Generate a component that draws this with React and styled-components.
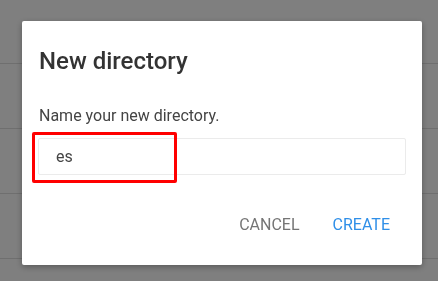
import React from "react";
import styled, { createGlobalStyle } from "styled-components";

const Global = createGlobalStyle`
  html, body { margin: 0; padding: 0; background: #ffffff; overflow: hidden; }
  body { font-family: Roboto, "Liberation Sans", sans-serif; }
  * { box-sizing: border-box; }
`;

const RowList = styled.div`
  margin-top: -1px;
  display: flex;
  flex-direction: column;
`;

const Row = styled.div`
  height: 65px;
  border-bottom: 1px solid #dfdfdf;
`;

const Backdrop = styled.div`
  position: fixed;
  inset: 0;
  background: rgba(0, 0, 0, 0.5);
  display: flex;
  align-items: flex-start;
  justify-content: flex-start;
  padding: 21px 0 0 22px;
`;

const Dialog = styled.div`
  width: 400px;
  height: 244px;
  background: #fff;
  border-radius: 2px;
  box-shadow: 0 2px 6px rgba(0, 0, 0, 0.3);
  padding: 0 16px;
  display: flex;
  flex-direction: column;
`;

const Title = styled.h2`
  margin: 0;
  padding-top: 25px;
  font-size: 24px;
  line-height: 30px;
  font-weight: 500;
  color: #333;
  padding-left: 1px;
`;

const Body = styled.p`
  margin: 0;
  margin-top: 30px;
  font-size: 16px;
  line-height: 20px;
  color: #444;
  padding-left: 1px;
`;

const Field = styled.div`
  position: relative;
  margin-top: 12px;
`;

const Input = styled.input`
  display: block;
  width: 100%;
  height: 37px;
  border: 1px solid #ebebeb;
  border-radius: 2px;
  padding: 0 17px;
  font-family: Roboto, "Liberation Sans", sans-serif;
  font-size: 16px;
  color: #444;
  outline: none;
  background: #fff;
`;

const Highlight = styled.div`
  position: absolute;
  left: -6px;
  top: -6px;
  width: 145px;
  height: 51px;
  border: 3px solid #ff0000;
  border-radius: 2px;
  pointer-events: none;
`;

const Actions = styled.div`
  margin-top: 31px;
  display: flex;
  justify-content: flex-end;
  gap: 1px;
`;

const Button = styled.button`
  border: none;
  background: transparent;
  padding: 0 16px;
  height: 36px;
  font-family: Roboto, "Liberation Sans", sans-serif;
  font-size: 16px;
  text-transform: uppercase;
  color: ${(p) => (p.$primary ? "#2f8fe8" : "#757575")};
  cursor: pointer;
`;

export default function App() {
  return (
    <>
      <Global />
      <RowList>
        {Array.from({ length: 4 }).map((_, i) => (
          <Row key={i} />
        ))}
      </RowList>
      <Backdrop>
        <Dialog>
          <Title>New directory</Title>
          <Body>Name your new directory.</Body>
          <Field>
            <Input defaultValue="es" />
            <Highlight />
          </Field>
          <Actions>
            <Button>Cancel</Button>
            <Button $primary>Create</Button>
          </Actions>
        </Dialog>
      </Backdrop>
    </>
  );
}
